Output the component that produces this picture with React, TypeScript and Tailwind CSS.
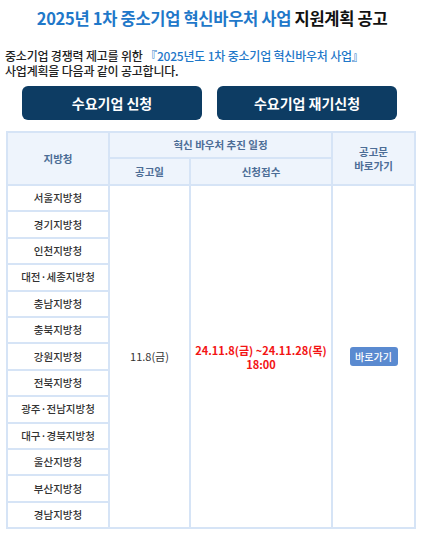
import React from "react";

const offices = [
  "서울지방청",
  "경기지방청",
  "인천지방청",
  "대전·세종지방청",
  "충남지방청",
  "충북지방청",
  "강원지방청",
  "전북지방청",
  "광주·전남지방청",
  "대구·경북지방청",
  "울산지방청",
  "부산지방청",
  "경남지방청",
];

export default function App() {
  return (
    <div
      className="w-[424px] h-[534px] bg-white overflow-hidden"
      style={{ fontFamily: '"Noto Sans CJK KR", "Noto Sans", sans-serif' }}
    >
      {/* Title */}
      <h1 className="pt-[6px] text-center text-[16.5px] leading-[24px] font-bold tracking-[-0.3px] text-[#1f78c9]">
        2025년 1차 중소기업 혁신바우처 사업 <span className="text-[#111]">지원계획 공고</span>
      </h1>

      {/* Description */}
      <p className="mt-[18px] px-[5px] text-[12px] leading-[15px] font-medium text-[#222] tracking-[-0.2px]">
        중소기업 경쟁력 제고를 위한{" "}
        <span className="text-[#1f78c9]">『2025년도 1차 중소기업 혁신바우처 사업』</span>
        <br />
        사업계획을 다음과 같이 공고합니다.
      </p>

      {/* Buttons */}
      <div className="mt-[8px] flex gap-[15px] pl-[22px]">
        <button className="w-[180px] h-[34px] rounded-[6px] bg-[#0d3c63] text-white text-[14px] font-bold">
          수요기업 신청
        </button>
        <button className="w-[180px] h-[34px] rounded-[6px] bg-[#0d3c63] text-white text-[14px] font-bold">
          수요기업 재기신청
        </button>
      </div>

      {/* Schedule table */}
      <table className="mt-[11px] ml-[6px] w-[408px] border-collapse table-fixed text-[10.5px]">
        <colgroup>
          <col className="w-[102px]" />
          <col className="w-[81px]" />
          <col className="w-[142px]" />
          <col className="w-[83px]" />
        </colgroup>
        <thead className="bg-[#eef4fc] text-[#4c6d96] font-bold">
          <tr className="h-[26px]">
            <th rowSpan={2} className="border-2 border-[#d6e4f6] font-bold">
              지방청
            </th>
            <th colSpan={2} className="border-2 border-[#d6e4f6] font-bold">
              혁신 바우처 추진 일정
            </th>
            <th rowSpan={2} className="border-2 border-[#d6e4f6] font-bold leading-[14px]">
              공고문
              <br />
              바로가기
            </th>
          </tr>
          <tr className="h-[27px]">
            <th className="border-2 border-[#d6e4f6] font-bold">공고일</th>
            <th className="border-2 border-[#d6e4f6] font-bold">신청접수</th>
          </tr>
        </thead>
        <tbody className="text-[#333]">
          {offices.map((name, i) => (
            <tr key={name} className="h-[26.4px]">
              <td className="border-2 border-[#d6e4f6] text-center font-medium">{name}</td>
              {i === 0 && (
                <>
                  <td rowSpan={13} className="border-2 border-[#d6e4f6] text-center text-[11px]">
                    11.8(금)
                  </td>
                  <td
                    rowSpan={13}
                    className="border-2 border-[#d6e4f6] text-center text-[11px] leading-[14px] font-bold text-[#f31414]"
                  >
                    24.11.8(금) ~24.11.28(목)
                    <br />
                    18:00
                  </td>
                  <td rowSpan={13} className="border-2 border-[#d6e4f6] text-center">
                    <button className="w-[48px] h-[19px] rounded-[3px] bg-[#5a8ad0] text-white text-[10px] font-medium">
                      바로가기
                    </button>
                  </td>
                </>
              )}
            </tr>
          ))}
        </tbody>
      </table>
    </div>
  );
}
